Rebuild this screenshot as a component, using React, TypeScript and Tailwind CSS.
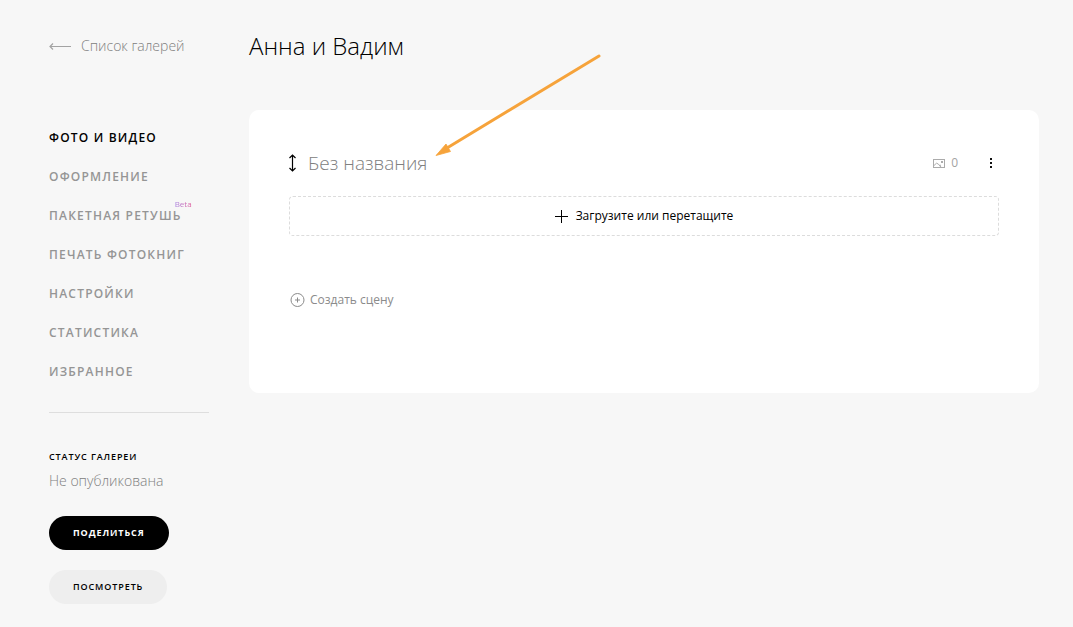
import { useState } from "react"

const NAV = [
  { label: "Фото и видео", href: "#photos" },
  { label: "Оформление", href: "#design" },
  { label: "Пакетная ретушь", href: "#retouch", beta: true },
  { label: "Печать фотокниг", href: "#books" },
  { label: "Настройки", href: "#settings" },
  { label: "Статистика", href: "#stats" },
  { label: "Избранное", href: "#favorites" },
]

function Sidebar() {
  const [active, setActive] = useState("#photos")

  return (
    <aside className="w-40 shrink-0">
      <a href="#galleries" className="flex h-7 items-center gap-[10px] whitespace-nowrap text-sm font-light text-[#808080]">
        <svg width="22" height="8" viewBox="0 0 22 8" fill="none" stroke="#a3a3a3" strokeWidth="1.2">
          <path d="M22 4.5H1M4 1.500L1 4.500L4 7.500" />
        </svg>
        Список галерей
      </a>

      <nav className="mt-[68px] flex flex-col items-start gap-[19px]">
        {NAV.map((item) => (
          <a
            key={item.href}
            href={item.href}
            onClick={() => setActive(item.href)}
            className={`relative whitespace-nowrap text-xs leading-5 font-semibold tracking-widest uppercase ${
              active === item.href ? "text-black" : "text-[#959595]"
            }`}
          >
            {item.label}
            {item.beta && (
              <span className="absolute -top-2 -right-[10px] bg-linear-to-r from-[#a57fe0] to-[#e05a9a] bg-clip-text text-[8px] leading-3 font-normal tracking-normal text-transparent normal-case">
                Beta
              </span>
            )}
          </a>
        ))}
      </nav>

      <hr className="mt-[30px] border-[#dedede]" />

      <h2 className="mt-9 text-[9px] leading-4 font-semibold tracking-widest text-black uppercase">Статус галереи</h2>
      <p className="mt-[6px] text-sm leading-5 font-light text-[#808080]">Не опубликована</p>

      <div className="mt-[25px] flex flex-col items-start gap-5">
        <button type="button" className="h-[34px] rounded-full bg-black px-6 text-[9px] font-bold tracking-widest text-white uppercase">
          Поделиться
        </button>
        <button type="button" className="h-[34px] rounded-full bg-[#eeeeee] px-6 text-[9px] font-semibold tracking-widest text-black uppercase">
          Посмотреть
        </button>
      </div>
    </aside>
  )
}

function Scene() {
  const [name, setName] = useState("")

  return (
    <section>
      <div className="flex h-[26px] items-center">
        <button type="button" aria-label="Переместить сцену">
          <svg width="7" height="18" viewBox="0 0 7 18" fill="none" stroke="#000" strokeWidth="1.2">
            <path d="M3.5 1V17M0.500 4L3.500 1L6.500 4M0.500 14L3.500 17L6.500 14" />
          </svg>
        </button>
        <input
          type="text"
          aria-label="Название сцены"
          placeholder="Без названия"
          value={name}
          onChange={(e) => setName(e.target.value)}
          className="ml-3 min-w-0 flex-1 bg-transparent text-[19px] leading-[26px] font-light text-black outline-none placeholder:text-[#808080]"
        />
        <span className="flex items-center gap-[6px] text-xs text-[#a3a3a3]">
          <svg width="12" height="9" viewBox="0 0 12 9" fill="none" stroke="#ababab">
            <rect x="0.5" y="0.5" width="11" height="8" />
            <path d="M1 6.5L3.500 4.200L5.300 5L8.300 8.300M6.500 6.800L8 6" />
            <rect x="8" y="2" width="2" height="2" fill="#ababab" stroke="none" />
          </svg>
          0
        </span>
        <button type="button" aria-label="Меню сцены" className="mr-[7px] ml-8">
          <svg width="2" height="10" viewBox="0 0 2 10" fill="#111">
            <rect width="2" height="2" />
            <rect y="4" width="2" height="2" />
            <rect y="8" width="2" height="2" />
          </svg>
        </button>
      </div>

      <button
        type="button"
        className="mt-5 flex h-10 w-full items-center justify-center gap-2 rounded border border-dashed border-[#dcdcdc] text-xs text-black"
      >
        <svg width="13" height="13" viewBox="0 0 13 13" stroke="#000">
          <path d="M6.5 0V13M0 6.5H13" />
        </svg>
        Загрузите или перетащите
      </button>
    </section>
  )
}

export default function App() {
  return (
    <div className="relative flex min-h-screen gap-10 bg-[#f7f7f7] pt-8 pr-[34px] pb-[23px] pl-[49px] font-['Open_Sans','Noto_Sans',sans-serif]">
      <Sidebar />

      <main className="min-w-0 flex-1">
        <h1 className="text-2xl leading-7 font-light text-black">Анна и Вадим</h1>

        <div className="mt-[50px] rounded-[10px] bg-white px-10 pt-10 pb-[83px]">
          <Scene />
          <button type="button" className="mt-[54px] flex h-5 items-center gap-[5px] pl-px text-xs text-[#8b8b8b]">
            <svg width="15" height="15" viewBox="0 0 15 15" fill="none" stroke="#8b8b8b">
              <circle cx="7.5" cy="7" r="6.5" />
              <path d="M7.5 4.500V9.500M5 7H10" />
            </svg>
            Создать сцену
          </button>
        </div>
      </main>

      {/* Hint arrow pointing at the scene name */}
      <svg className="pointer-events-none absolute top-[52px] left-[435px]" width="168" height="106" viewBox="0 0 168 106">
        <path d="M164 4L12 96" stroke="#f6a33b" strokeWidth="3" strokeLinecap="round" />
        <path d="M1 103.500L11 92L12.500 94.500L15.500 99.500Z" fill="#f6a33b" stroke="#f6a33b" strokeWidth="0.8" />
      </svg>
    </div>
  )
}
